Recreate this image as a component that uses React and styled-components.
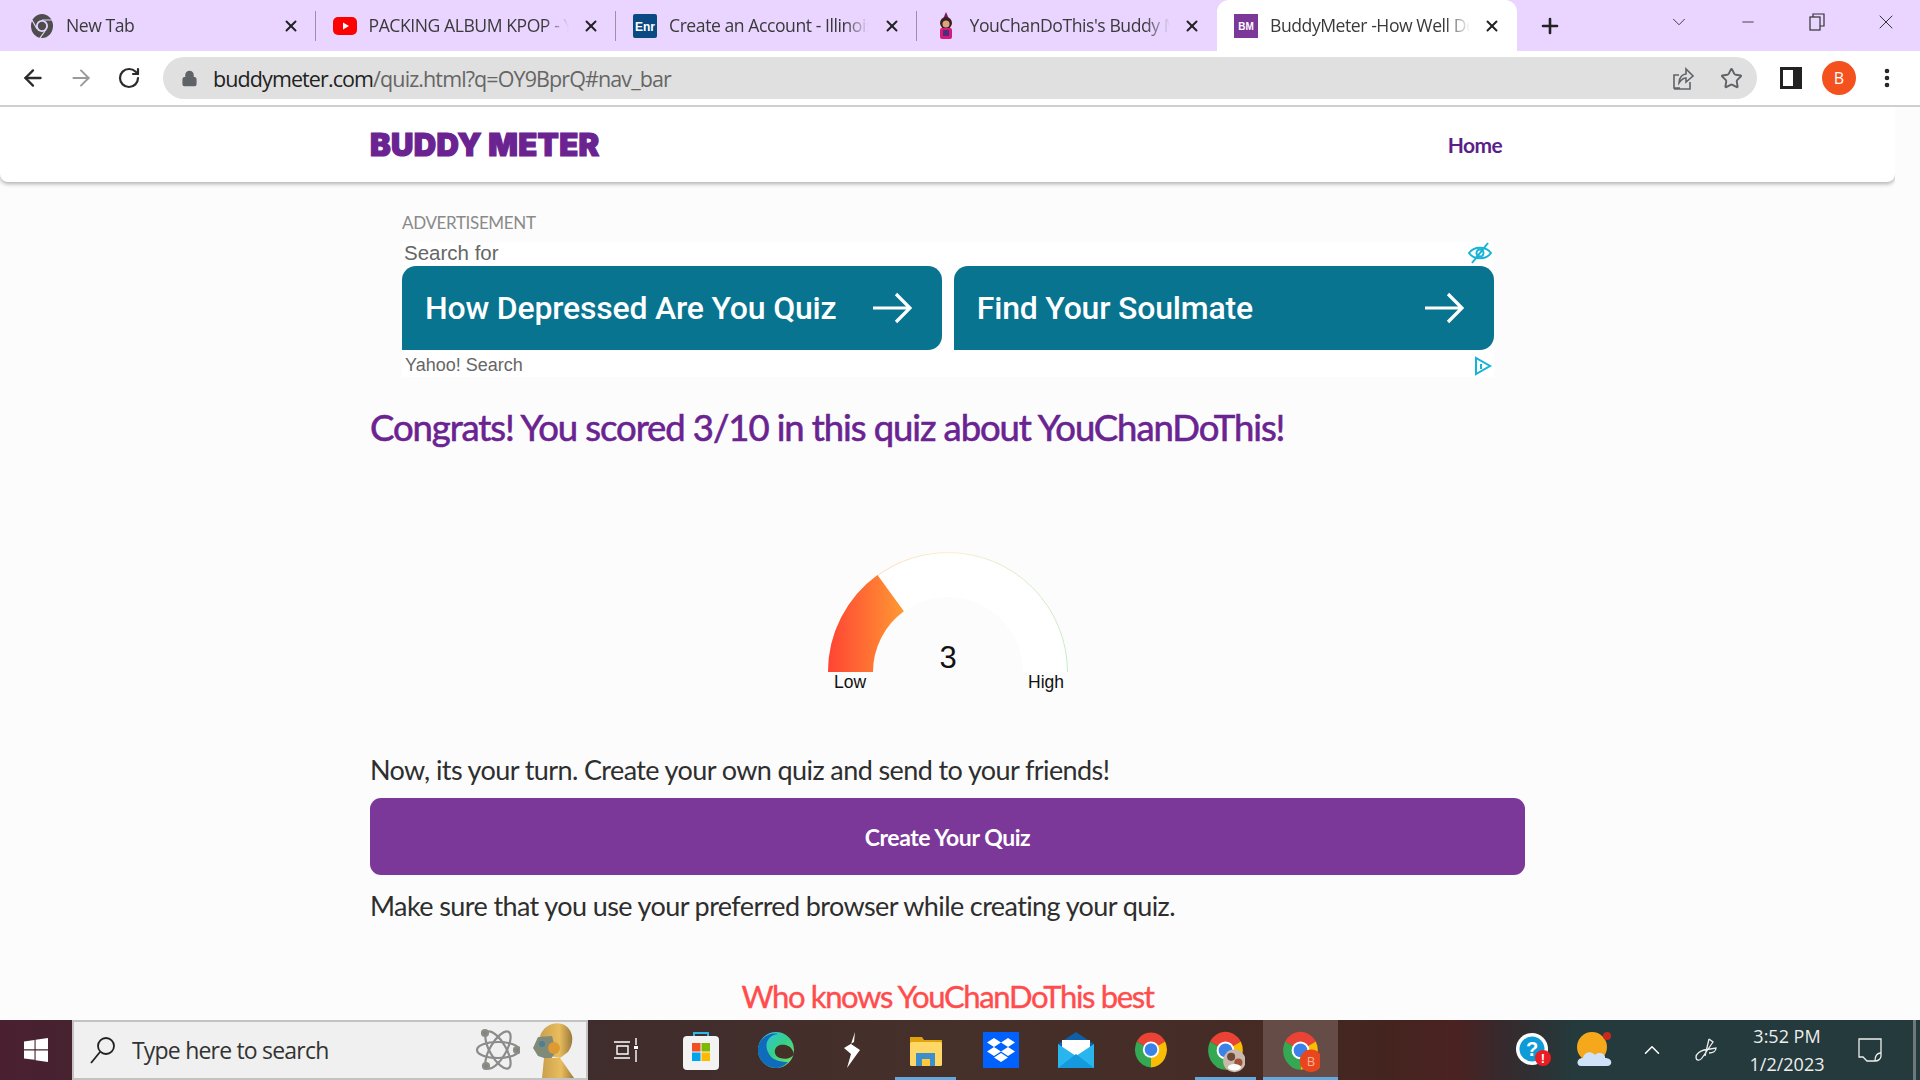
import React from 'react';
import styled, { createGlobalStyle } from 'styled-components';
import { X, Plus, Minus, ChevronDown, ArrowLeft, ArrowRight, RotateCw, Lock, Star, MoreVertical, ChevronUp } from 'lucide-react';

const Global = createGlobalStyle`
  html, body { margin: 0; padding: 0; height: 100%; overflow: hidden; background: #fcfcfc; }
  #root { height: 100%; }
  * { box-sizing: border-box; }
`;
const Shell = styled.div`
  width: 1920px; height: 1080px; display: flex; flex-direction: column; overflow: hidden;
  font-family: "Open Sans", "Noto Sans", sans-serif;
`;
const TabStrip = styled.div`
  height: 51px; flex: none; background: #e9d5ff; display: flex; align-items: center; padding-left: 15px;
`;
const Tab = styled.div`
  width: ${p => p.$w || 300.5}px; height: 51px; display: flex; align-items: center; flex: none; position: relative;
  padding: 0 15px 0 ${p => p.$pad || 17}px;
  background: ${p => (p.$active ? '#fff' : 'transparent')};
  border-radius: ${p => (p.$active ? '12px 12px 0 0' : '0')};
  &::after {
    content: ''; display: ${p => (p.$sep ? 'block' : 'none')};
    position: absolute; right: 0; top: 11px; width: 1px; height: 30px; background: #9d8fa8;
  }
`;
const TabIcon = styled.span`
  width: 24px; height: 24px; flex: none; display: flex; align-items: center; justify-content: center; margin-right: 12px;
`;
const TabTitle = styled.span`
  flex: none; width: 204px; font-size: 17.6px; letter-spacing: -0.45px; color: #3a3a3a; white-space: nowrap; overflow: hidden;
  margin-top: -1px;
  mask-image: linear-gradient(90deg, #000 86%, transparent 98%);
`;
const TabClose = styled.span`
  width: 20px; flex: none; display: flex; justify-content: center; color: #222; margin-left: auto;
`;
const NewTab = styled.span`
  width: 66px; display: flex; justify-content: center; color: #222; flex: none;
`;
const WinCtrls = styled.div`
  margin-left: auto; display: flex; align-items: center; height: 51px; color: #333;
`;
const WinBtn = styled.span`
  width: 69px; display: flex; justify-content: center; align-items: center; margin-top: -8px;
`;
const Toolbar = styled.div`
  height: 54px; flex: none; background: #fff; display: flex; align-items: center;
`;
const NavBtn = styled.span`
  width: 48px; flex: none; display: flex; justify-content: center; color: ${p => p.$dim ? '#9a9a9a' : '#2b2b2b'};
  margin-left: ${p => p.$ml || 0}px;
`;
const Omni = styled.div`
  width: 1594px; height: 42px; margin-left: 10px; border-radius: 21px; background: #e0e0e0; flex: none;
  display: flex; align-items: center; padding: 0 2px 0 18px;
`;
const Url = styled.span`
  font-size: 21.5px; letter-spacing: -0.9px; color: #666; margin-left: 15px; white-space: nowrap;
  b { color: #222; font-weight: 400; }
`;
const OmniEnd = styled.div`
  margin-left: auto; display: flex; align-items: center; color: #5f6368;
`;
const OmniIcon = styled.span`
  width: 48px; display: flex; justify-content: center;
`;
const ToolIcons = styled.div`
  display: flex; align-items: center; margin-left: 10px;
`;
const ToolSlot = styled.span`
  width: 48px; display: flex; justify-content: center; align-items: center; color: #222;
`;
const Avatar = styled.span`
  width: 34px; height: 34px; border-radius: 50%; background: #f4511e; color: #fff; font-size: 16px;
  display: flex; align-items: center; justify-content: center;
`;
const Divider = styled.div`
  height: 2px; flex: none; background: #cfcfcf;
`;
const Page = styled.main`
  flex: 1; min-height: 0; width: 1895px; overflow: hidden; background: #fcfcfc;
  font-family: Lato, "Open Sans", sans-serif;
`;
const SiteNav = styled.nav`
  height: 75px; background: #fff; border-radius: 0 0 8px 8px; box-shadow: 0 2px 4px rgba(0,0,0,.3);
`;
const NavRow = styled.div`
  width: 1155px; margin: 0 auto; height: 100%; display: flex; align-items: center; justify-content: space-between;
  padding-right: 23px;
`;
const Logo = styled.a`
  font-family: Inter, sans-serif; font-weight: 900; font-size: 31px; color: #6a2391; letter-spacing: 0.3px;
  -webkit-text-stroke: 1.2px #6a2391;
`;
const HomeLink = styled.a`
  font-size: 21px; font-weight: 700; letter-spacing: -0.6px; color: #5b1f8a;
`;
const Content = styled.div`
  width: 1155px; margin: 0 auto;
`;
const AdBlock = styled.section`
  margin: 0 31px 0 32px; padding-top: 32px;
`;
const AdLabel = styled.div`
  font-size: 17px; line-height: 18px; color: #8a8a8a; height: 28px; letter-spacing: -0.35px;
`;
const AdBox = styled.div`
  background: #fff; height: 135px; display: flex; flex-direction: column;
`;
const AdHead = styled.div`
  height: 24px; display: flex; justify-content: space-between; align-items: center; padding: 0 2px 2px;
  font-family: "Liberation Sans", Arial, sans-serif; font-size: 20.5px; color: #666;
`;
const AdRow = styled.div`
  height: 84px; display: flex; gap: 11.5px;
`;
const AdBtn = styled.a`
  flex: 1; background: #087490; color: #fff; display: flex; align-items: center;
  justify-content: space-between; padding: 0 30px 0 23px;
  border-radius: 14px 14px 14px 0;
  font-family: Roboto, sans-serif; font-weight: 500; font-size: 32px; letter-spacing: -0.2px;
`;
const AdFoot = styled.div`
  height: 27px; display: flex; justify-content: space-between; align-items: center; padding: 4px 2px 0 3px;
  font-family: "Liberation Sans", Arial, sans-serif; font-size: 18px; color: #666;
`;
const Heading = styled.h1`
  margin: 25px 0 0; font-weight: 400; font-size: 36.5px; line-height: 50px; padding-bottom: 2px; color: #6a2391;
  letter-spacing: -1.1px; -webkit-text-stroke: 0.6px #6a2391; white-space: nowrap;
`;
const GaugeWrap = styled.div`
  display: flex; justify-content: center; margin-top: 98px; height: 144px;
`;
const Lead = styled.p`
  margin: ${p => p.$mt}px 0 0; font-size: 27px; line-height: 36px; letter-spacing: -0.6px; color: #2e2e2e; font-weight: 400; white-space: nowrap;
`;
const Cta = styled.a`
  display: flex; align-items: center; justify-content: center; width: 100%; height: 77px; margin-top: 10px;
  border-radius: 11px; background: #7b3899; color: #fff; font-weight: 700; font-size: 23px; letter-spacing: -0.45px;
`;
const Sub = styled.h2`
  margin: 50px 0 0; text-align: center; font-size: 31px; line-height: 44px; font-weight: 400; letter-spacing: -1.35px;
  color: #ff4d4d; -webkit-text-stroke: 0.4px #ff4d4d;
`;
const Taskbar = styled.footer`
  height: 60px; flex: none; display: flex; align-items: stretch;
  background: linear-gradient(90deg, #4a2030 0%, #46222f 4%, #3f2c2c 30%, #46302a 50%, #462b25 66%, #44241f 72%, #4a2222 76%, #38282c 78%, #243a3c 82%, #243a3c 100%);
`;
const Start = styled.div`
  width: 72px; display: flex; align-items: center; justify-content: center; flex: none;
`;
const SearchBox = styled.div`
  width: 516px; flex: none; background: #f0f0f0; border: 2px solid #c3c3c3; display: flex; align-items: center;
  padding-left: 16px; overflow: hidden;
`;
const SearchText = styled.span`
  font-size: 23px; letter-spacing: -0.8px; color: #333; margin-left: 16px;
`;
const SearchArt = styled.div`
  margin-left: auto; display: flex; align-items: center; gap: 10px; padding-right: 6px; height: 100%;
`;
const Slot = styled.div`
  width: 75px; flex: none; display: flex; align-items: center; justify-content: center; position: relative;
  background: ${p => p.$active ? '#654c46' : 'transparent'};
  &::after {
    content: ''; display: ${p => p.$under ? 'block' : 'none'};
    position: absolute; left: ${p => p.$active ? 0 : 7}px; right: ${p => p.$active ? 0 : 7}px; bottom: 0; height: 3px; background: #63a9e0;
  }
`;
const Tray = styled.div`
  margin-left: auto; display: flex; align-items: center; color: #fff;
`;
const TraySlot = styled.span`
  width: ${p => p.$w}px; flex: none; display: flex; justify-content: center; align-items: center;
`;
const Clock = styled.div`
  width: 118px; flex: none; margin-right: 12px; text-align: center; font-size: 18px; line-height: 28px; color: #eee;
`;
const EdgeBar = styled.span`
  width: 3px; height: 60px; background: #6d7a7b; margin-left: 31px; margin-right: 4px; flex: none;
`;

const ChromeIcon = ({ size = 40, badge }) => (
  <svg width={size} height={size * 1.2} viewBox="0 0 48 58">
    <g transform="translate(0 5)">
      <path d="M24 24 L4.9 13 A22 24 0 0 1 43 13 Z" fill="#ea4335" />
      <path d="M24 24 L43 13 A22 24 0 0 1 24 48 Z" fill="#fbbc04" />
      <path d="M24 24 L24 48 A22 24 0 0 1 4.9 13 Z" fill="#34a853" />
      <circle cx="24" cy="24" r="11" fill="#fff" />
      <circle cx="24" cy="24" r="8.5" fill="#3b82e8" />
    </g>
    {badge === 'photo' && <g><circle cx="35" cy="42" r="14" fill="#c9b9ac" /><circle cx="31" cy="37" r="5" fill="#6c4a3a" /><circle cx="40" cy="44" r="5" fill="#a0523a" /><ellipse cx="35" cy="50" rx="8" ry="4" fill="#fff" /></g>}
    {badge === 'b' && <g><circle cx="37" cy="42" r="14" fill="#e8461c" /><text x="37" y="48" fontSize="16" fill="#ffb199" textAnchor="middle" fontFamily="Open Sans">B</text></g>}
  </svg>
);

const ChromeMono = () => (
  <svg width="22" height="24" viewBox="0 0 22 24" fill="none">
    <ellipse cx="11" cy="12" rx="11" ry="12" fill="#4d4d4d" />
    <circle cx="11" cy="12" r="6" fill="#e9d5ff" />
    <circle cx="11" cy="12" r="4.2" fill="#4d4d4d" />
    <path d="M11 6 H21 M6 15 L1 6 M14 17 L9 24" stroke="#e9d5ff" strokeWidth="1.2" />
  </svg>
);

const Gauge = () => {
  const a = Math.PI * 0.7;
  const pt = (rad) => `${120 + rad * Math.cos(a)} ${120 - rad * Math.sin(a)}`;
  return (
    <svg width="240" height="144" viewBox="0 0 240 144">
      <defs>
        <linearGradient id="g1" x1="0" x2="1" y1="0" y2="0">
          <stop offset="0" stopColor="#ff4433" /><stop offset="1" stopColor="#ff9933" />
        </linearGradient>
        <linearGradient id="g2" x1="0" x2="1" y1="0" y2="0">
          <stop offset="0" stopColor="#ffc8b8" /><stop offset=".5" stopColor="#fbeecb" /><stop offset="1" stopColor="#c5ebc5" />
        </linearGradient>
      </defs>
      <path d="M0 120 A120 120 0 0 1 240 120 L195 120 A75 75 0 0 0 45 120 Z" fill="#fff" />
      <path d="M0.5 120 A119.5 119.5 0 0 1 239.5 120" fill="none" stroke="url(#g2)" strokeWidth="1" />
      <path d={`M0 120 A120 120 0 0 1 ${pt(120)} L${pt(75)} A75 75 0 0 0 45 120 Z`} fill="url(#g1)" />
      <text x="120" y="116" textAnchor="middle" fontFamily="Liberation Sans" fontSize="31" fill="#111">3</text>
      <text x="22" y="136" textAnchor="middle" fontFamily="Liberation Sans" fontSize="17.5" fill="#111">Low</text>
      <text x="218" y="136" textAnchor="middle" fontFamily="Liberation Sans" fontSize="17.5" fill="#111">High</text>
    </svg>
  );
};

const Arrow = () => (
  <svg width="40" height="32" viewBox="0 0 40 32" fill="none" stroke="#fff" strokeWidth="3.2">
    <path d="M1 16 H37 M24 2 L38 16 L24 30" />
  </svg>
);

const tabs = [
  { title: 'New Tab', pad: 15, icon: <ChromeMono />, sep: true },
  { title: 'PACKING ALBUM KPOP - YouTube', sep: true, icon: <svg width="24" height="24" viewBox="0 0 24 24"><rect y="3" width="24" height="18" rx="5" fill="#f00" /><path d="M10 8.5 L16 12 L10 15.5 Z" fill="#fff" /></svg> },
  { title: 'Create an Account - Illinois', sep: true, icon: <svg width="24" height="24" viewBox="0 0 24 24"><rect width="24" height="24" rx="2" fill="#0a4a82" /><text x="12" y="16.5" fontSize="12" fontWeight="700" textAnchor="middle" fill="#fff" fontFamily="Liberation Sans">Enr</text></svg> },
  { title: "YouChanDoThis's Buddy Meter", icon: <svg width="24" height="28" viewBox="0 0 24 28"><path d="M12 0 L15 7 H9 Z" fill="#7a1b5a" /><circle cx="12" cy="11" r="6" fill="#3a2020" /><circle cx="12" cy="12" r="3.5" fill="#d9a57e" /><rect x="6" y="16" width="12" height="11" rx="2" fill="#d8197a" /><rect x="9" y="18" width="6" height="6" fill="#4b2d7f" /></svg> },
];

export default function App() {
  return (
    <Shell>
      <Global />
      <TabStrip>
        {tabs.map(t => (
          <Tab key={t.title} $sep={t.sep} $pad={t.pad}>
            <TabIcon>{t.icon}</TabIcon>
            <TabTitle>{t.title}</TabTitle>
            <TabClose><X size={18} strokeWidth={2.6} /></TabClose>
          </Tab>
        ))}
        <Tab $active $w={300}>
          <TabIcon><svg width="24" height="24" viewBox="0 0 24 24"><rect width="24" height="24" fill="#7b3899" /><text x="12" y="15.5" fontSize="10" fontWeight="700" textAnchor="middle" fill="#fff" fontFamily="Liberation Sans">BM</text></svg></TabIcon>
          <TabTitle>BuddyMeter -How Well Do You Know</TabTitle>
          <TabClose><X size={18} strokeWidth={2.6} /></TabClose>
        </Tab>
        <NewTab><Plus size={24} strokeWidth={2.6} /></NewTab>
        <WinCtrls>
          <WinBtn><ChevronDown size={22} strokeWidth={1} /></WinBtn>
          <WinBtn><Minus size={18} strokeWidth={1.2} /></WinBtn>
          <WinBtn>
            <svg width="16" height="18" viewBox="0 0 16 18" fill="none" stroke="#333" strokeWidth="1.2"><rect x="1" y="4" width="10" height="13" /><path d="M4 4 V1 H15 V13 H11" /></svg>
          </WinBtn>
          <WinBtn><X size={24} strokeWidth={1} /></WinBtn>
        </WinCtrls>
      </TabStrip>
      <Toolbar>
        <NavBtn $ml={9}><ArrowLeft size={26} strokeWidth={2.1} /></NavBtn>
        <NavBtn $dim><ArrowRight size={26} strokeWidth={1.8} /></NavBtn>
        <NavBtn><RotateCw size={24} strokeWidth={2.2} /></NavBtn>
        <Omni>
          <Lock size={17} fill="#5f6368" color="#5f6368" />
          <Url><b>buddymeter.com</b>/quiz.html?q=OY9BprQ#nav_bar</Url>
          <OmniEnd>
            <OmniIcon>
              <svg width="24" height="24" viewBox="0 0 24 24" fill="none" stroke="#5f6368" strokeWidth="1.6"><path d="M9 22 H3 V9 H8 M3 23 H19 V16" /><path d="M8 17 C8 11 12 8 15 8 V3 L22 10 L15 16 V12 C12 12 10 14 8 17 Z" /></svg>
            </OmniIcon>
            <OmniIcon><Star size={23} strokeWidth={2} /></OmniIcon>
          </OmniEnd>
        </Omni>
        <ToolIcons>
          <ToolSlot>
            <svg width="22" height="22" viewBox="0 0 22 22" fill="none" stroke="#222" strokeWidth="3"><rect x="1.5" y="1.5" width="19" height="19" /><rect x="13" y="2" width="7" height="18" fill="#222" stroke="none" /></svg>
          </ToolSlot>
          <ToolSlot><Avatar>B</Avatar></ToolSlot>
          <ToolSlot><MoreVertical size={24} strokeWidth={2.6} /></ToolSlot>
        </ToolIcons>
      </Toolbar>
      <Divider />
      <Page>
        <SiteNav>
          <NavRow>
            <Logo>BUDDY METER</Logo>
            <HomeLink>Home</HomeLink>
          </NavRow>
        </SiteNav>
        <Content>
          <AdBlock>
            <AdLabel>ADVERTISEMENT</AdLabel>
            <AdBox>
              <AdHead>
                <span>Search for</span>
                <svg width="24" height="22" viewBox="0 0 24 22" fill="none" stroke="#15b3d6" strokeWidth="2"><path d="M1 11 C6 4 18 4 23 11 C18 18 6 18 1 11 Z" /><circle cx="12" cy="11" r="3.5" /><path d="M20 1 L4 21" /></svg>
              </AdHead>
              <AdRow>
                <AdBtn>How Depressed Are You Quiz<Arrow /></AdBtn>
                <AdBtn>Find Your Soulmate<Arrow /></AdBtn>
              </AdRow>
              <AdFoot>
                <span>Yahoo! Search</span>
                <svg width="18" height="20" viewBox="0 0 18 20" fill="none" stroke="#15b3d6" strokeWidth="2"><path d="M2 2 V18 L16 10 Z" /><path d="M7 8 V13" /></svg>
              </AdFoot>
            </AdBox>
          </AdBlock>
          <Heading>Congrats! You scored 3/10 in this quiz about YouChanDoThis!</Heading>
          <GaugeWrap><Gauge /></GaugeWrap>
          <Lead $mt={56}>Now, its your turn. Create your own quiz and send to your friends!</Lead>
          <Cta>Create Your Quiz</Cta>
          <Lead $mt={13}>Make sure that you use your preferred browser while creating your quiz.</Lead>
          <Sub>Who knows YouChanDoThis best</Sub>
        </Content>
      </Page>
      <Taskbar>
        <Start>
          <svg width="24" height="24" viewBox="0 0 24 24" fill="#fff"><path d="M0 3.5 L10.5 2 V11.2 H0 Z M11.6 1.8 L24 0 V11.2 H11.6 Z M0 12.4 H10.5 V21.8 L0 20.4 Z M11.6 12.4 H24 V24 L11.6 22.2 Z" /></svg>
        </Start>
        <SearchBox>
          <svg width="26" height="28" viewBox="0 0 26 28" fill="none" stroke="#222" strokeWidth="1.8"><circle cx="16" cy="10" r="8" /><path d="M10 16 L1 27" /></svg>
          <SearchText>Type here to search</SearchText>
          <SearchArt>
            <svg width="44" height="44" viewBox="0 0 44 44" fill="none" stroke="#8c8c8c" strokeWidth="2.2">
              <ellipse cx="22" cy="22" rx="21" ry="8" /><ellipse cx="22" cy="22" rx="21" ry="8" transform="rotate(60 22 22)" /><ellipse cx="22" cy="22" rx="21" ry="8" transform="rotate(120 22 22)" />
              <circle cx="9" cy="5" r="3" fill="#8a8470" /><circle cx="41" cy="22" r="3" fill="#8a8470" /><circle cx="10" cy="38" r="3" fill="#8a8470" />
            </svg>
            <svg width="50" height="56" viewBox="0 0 50 56">
              <defs><linearGradient id="rb" x1="0" x2="1" y1="0" y2="0"><stop offset="0" stopColor="#c9a04e" /><stop offset=".6" stopColor="#e9bd5e" /><stop offset="1" stopColor="#9a7a3a" /></linearGradient></defs>
              <path d="M10 14 C14 2 28 -2 36 4 C44 10 44 22 38 30 L30 36 L20 34 Z" fill="url(#rb)" />
              <path d="M3 26 L8 15 L22 14 L26 30 L20 38 L8 34 Z" fill="#7f8a78" />
              <circle cx="12" cy="22" r="3" fill="#4e7f94" />
              <circle cx="24" cy="26" r="6" fill="#dd9a33" />
              <path d="M14 36 L30 36 L44 56 L12 56 Z" fill="url(#rb)" />
            </svg>
          </SearchArt>
        </SearchBox>
        <Slot>
          <svg width="24" height="26" viewBox="0 0 24 26" fill="none" stroke="#fff" strokeWidth="1.4"><path d="M0 5 H16 M0 21 H16 M3 9 H14 V17 H3 Z M22 1 V8 M22 13 V25" /><rect x="20" y="9" width="4" height="3" fill="#fff" stroke="none" /></svg>
        </Slot>
        <Slot>
          <svg width="36" height="40" viewBox="0 0 36 40"><path d="M11 8 V3 H25 V8" fill="none" stroke="#2fb6ea" strokeWidth="2" /><rect y="6" width="36" height="34" rx="4" fill="#f3f3f3" /><rect x="9" y="13" width="8.5" height="8.5" fill="#f25022" /><rect x="18.5" y="13" width="8.5" height="8.5" fill="#7fba00" /><rect x="9" y="22.5" width="8.5" height="8.5" fill="#00a4ef" /><rect x="18.5" y="22.5" width="8.5" height="8.5" fill="#ffb900" /></svg>
        </Slot>
        <Slot>
          <svg width="36" height="36" viewBox="0 0 36 36">
            <defs><linearGradient id="ed" x1="0" x2="1" y1="0" y2="1"><stop offset="0" stopColor="#35c1f1" /><stop offset=".5" stopColor="#34d08a" /><stop offset="1" stopColor="#7fe06c" /></linearGradient></defs>
            <circle cx="18" cy="18" r="18" fill="url(#ed)" />
            <path d="M0 18 C0 6 12 0 20 2 C10 3 6 12 10 20 C13 28 22 30 30 30 C26 34 22 36 18 36 C8 36 0 28 0 18 Z" fill="#0f6cbd" />
            <path d="M36 22 C34 14 28 12 22 13 C15 15 15 24 22 26 C28 28 34 26 36 22 Z" fill="#453028" />
          </svg>
        </Slot>
        <Slot>
          <svg width="18" height="36" viewBox="0 0 18 36" fill="#fff"><path d="M13 0 L12 10 L2 16 L9 22 L5 36 L15 22 L18 18 L9 12 Z" /></svg>
        </Slot>
        <Slot $under>
          <svg width="34" height="32" viewBox="0 0 34 32"><path d="M1 3 H13 L15 6 H33 V30 H1 Z" fill="#e0a30e" /><rect x="1" y="8" width="32" height="24" rx="1.5" fill="#ffd766" /><path d="M7 32 V19 H26 V32 H21 V25 H13 V32 Z" fill="#3d8fc9" /><rect x="13" y="25" width="8" height="7" fill="#ffc83d" /></svg>
        </Slot>
        <Slot>
          <svg width="36" height="36" viewBox="0 0 36 36"><rect width="36" height="36" fill="#0061fe" /><path d="M11 6 L18 10.5 L11 15 L4 10.5 Z M25 6 L32 10.5 L25 15 L18 10.5 Z M11 15 L18 19.5 L11 24 L4 19.5 Z M25 15 L32 19.5 L25 24 L18 19.5 Z M18 21 L25 25.5 L18 30 L11 25.5 Z" fill="#fff" /></svg>
        </Slot>
        <Slot>
          <svg width="36" height="36" viewBox="0 0 36 36"><path d="M0 12 L18 0 L36 12 V16 H0 Z" fill="#0f5ea8" /><path d="M4 8 H32 V24 H4 Z" fill="#fff" /><path d="M0 12 L18 24 L36 12 V36 H0 Z" fill="#29b6ee" /><path d="M0 36 L18 22 L36 36 Z" fill="#159ade" /></svg>
        </Slot>
        <Slot><ChromeIcon size={36} /></Slot>
        <Slot $under><ChromeIcon size={39} badge="photo" /></Slot>
        <Slot $under $active><ChromeIcon size={39} badge="b" /></Slot>
        <Tray>
          <TraySlot $w={72}>
            <svg width="38" height="36" viewBox="0 0 38 36"><circle cx="17" cy="17" r="16" fill="#fff" /><circle cx="17" cy="17" r="12.5" fill="#0e9bd8" /><text x="17" y="24" fontSize="20" fontWeight="700" textAnchor="middle" fill="#fff" fontFamily="Liberation Sans">?</text><circle cx="28" cy="26" r="8" fill="#ea1c24" /><text x="28" y="31" fontSize="13" fontWeight="700" textAnchor="middle" fill="#fff" fontFamily="Liberation Sans">!</text></svg>
          </TraySlot>
          <TraySlot $w={50}>
            <svg width="36" height="36" viewBox="0 0 36 36"><circle cx="15" cy="15" r="15" fill="#f5a81c" /><circle cx="30" cy="4" r="4" fill="#c62a1c" /><path d="M4 34 C-1 34 -1 26 6 26 C7 20 14 18 18 23 C22 19 29 22 28 26 C36 26 36 34 30 34 Z" fill="#cfe2f7" /></svg>
          </TraySlot>
          <TraySlot $w={64}><ChevronUp size={26} strokeWidth={1.4} /></TraySlot>
          <TraySlot $w={44}>
            <svg width="22" height="24" viewBox="0 0 22 24" fill="none" stroke="#eee" strokeWidth="1.3"><path d="M14 1 L18 4 L7 20 C5 23 1 23 1 19 C1 16 5 13 9 12 L21 10 C21 13 18 15 14 15 M14 1 L10 18" /></svg>
          </TraySlot>
          <Clock>3:52 PM<br />1/2/2023</Clock>
          <TraySlot $w={24}>
            <svg width="24" height="24" viewBox="0 0 24 24" fill="none" stroke="#eee" strokeWidth="1.3"><path d="M1 1 H23 V18 C23 21 20 23 17 23 H9 L5 19 H1 Z" /><path d="M23 15 C19 15 17 18 17 23" /></svg>
          </TraySlot>
          <EdgeBar />
        </Tray>
      </Taskbar>
    </Shell>
  );
}
